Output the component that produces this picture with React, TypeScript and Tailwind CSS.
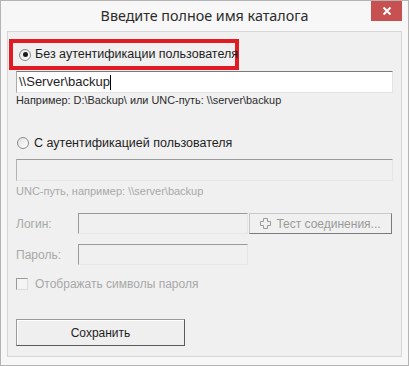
import React from 'react';

// Windows-style "enter full directory name" dialog

const sans = { fontFamily: '"Liberation Sans", Arial, sans-serif' };

const Radio: React.FC<{ checked?: boolean }> = ({ checked }) => (
  <span className="w-[12px] h-[12px] rounded-full border border-[#8a8a8a] bg-gradient-to-br from-[#e2e2e2] to-white flex items-center justify-center shrink-0">
    {checked && <span className="w-[5px] h-[5px] rounded-full bg-[#1a1a1a]" />}
  </span>
);

const PlusOutline: React.FC = () => (
  <svg width="11" height="11" viewBox="0 0 11 11" className="shrink-0">
    <path
      d="M3.5 0.5h4v3h3v4h-3v3h-4v-3h-3v-4h3z"
      fill="none"
      stroke="#9a9a9a"
      strokeWidth="1"
    />
  </svg>
);

export default function App() {
  return (
    <div
      className="w-[409px] h-[366px] border border-[#b4b4b4] bg-[#f7f7f7] relative flex flex-col"
      style={sans}
    >
      {/* Title bar */}
      <div className="h-[30px] flex items-center justify-center">
        <span
          className="text-[14.3px] text-[#2b2b2b] leading-none whitespace-nowrap"
          style={{ fontFamily: '"Noto Sans", "Open Sans", sans-serif' }}
        >
          Введите полное имя каталога
        </span>
      </div>
      <div className="absolute top-0 right-[6px] w-[31px] h-[20px] bg-[#c75050] flex items-center justify-center">
        <svg width="10" height="10" viewBox="0 0 10 10">
          <path d="M1.5 1.5l7 7M8.5 1.5l-7 7" stroke="#fff" strokeWidth="2" />
        </svg>
      </div>

      {/* Panel */}
      <div className="mx-[6px] h-[326px] border border-[#d6d6d6] bg-[#f0f0f0] flex flex-col">
        <div className="ml-px mt-[7px] w-[230px] h-[31px] border-4 border-[#e01b24] flex items-center pl-[6px] gap-[4px]">
          <Radio checked />
          <span className="text-[12.5px] text-[#1e1e1e] whitespace-nowrap">Без аутентификации пользователя</span>
        </div>

        <div className="mx-[8px] mt-px h-[22px] bg-white border border-t-[#7a7a7a] border-l-[#ababab] border-r-[#e3e3e3] border-b-[#e3e3e3] flex items-center pl-[2px]">
          <span className="text-[13px] text-[#1e1e1e]">\\Server\backup</span>
          <span className="w-px h-[15px] bg-black" />
        </div>
        <div className="mx-[8px] h-[14px] leading-[14px] text-[10.9px] text-[#2b2b2b] whitespace-nowrap">
          Например: D:\Backup\ или UNC-путь: \\server\backup
        </div>

        <div className="mx-[8px] mt-[28px] h-[16px] flex items-center gap-[5px] pl-[1px]">
          <Radio />
          <span className="text-[12.5px] text-[#1e1e1e] whitespace-nowrap">С аутентификацией пользователя</span>
        </div>

        <div className="mx-[8px] mt-[8px] h-[22px] bg-[#f0f0f0] border border-t-[#9a9a9a] border-l-[#b4b4b4] border-r-[#e6e6e6] border-b-[#e6e6e6]" />
        <div className="mx-[8px] mt-[3px] h-[14px] leading-[14px] text-[11px] text-[#a8a8a8]">
          UNC-путь, например: \\server\backup
        </div>

        <div className="mx-[8px] mt-[15px] h-[21px] flex items-center">
          <span className="w-[62px] text-[12px] text-[#a8a8a8]">Логин:</span>
          <div className="w-[170px] h-[21px] border border-t-[#9a9a9a] border-l-[#9a9a9a] border-r-[#e6e6e6] border-b-[#e6e6e6]" />
          <div className="ml-px w-[143px] h-[21px] border border-t-[#c8c8c8] border-l-[#c8c8c8] border-r-[#7a7a7a] border-b-[#7a7a7a] flex items-center justify-center gap-[5px]">
            <PlusOutline />
            <span className="text-[12px] text-[#9a9a9a]">Тест соединения...</span>
          </div>
        </div>

        <div className="mx-[8px] mt-[10px] h-[21px] flex items-center">
          <span className="w-[62px] text-[12px] text-[#a8a8a8]">Пароль:</span>
          <div className="w-[170px] h-[21px] border border-t-[#9a9a9a] border-l-[#9a9a9a] border-r-[#e6e6e6] border-b-[#e6e6e6]" />
        </div>

        <div className="mx-[8px] mt-[11px] h-[16px] flex items-center gap-[7px]">
          <span className="w-[12px] h-[12px] border border-t-[#9a9a9a] border-l-[#9a9a9a] border-r-[#dcdcdc] border-b-[#dcdcdc] bg-[#f4f4f4]" />
          <span className="text-[12px] text-[#a8a8a8]">Отображать символы пароля</span>
        </div>

        <div className="mx-[8px] mt-[27px] w-[169px] h-[27px] bg-[#efefef] border border-t-[#9a9a9a] border-l-[#9a9a9a] border-r-[#5a5a5a] border-b-[#5a5a5a] shadow-[inset_1px_1px_0_#ffffff] flex items-center justify-center">
          <span className="text-[12px] text-[#1e1e1e]">Сохранить</span>
        </div>
      </div>
    </div>
  );
}
